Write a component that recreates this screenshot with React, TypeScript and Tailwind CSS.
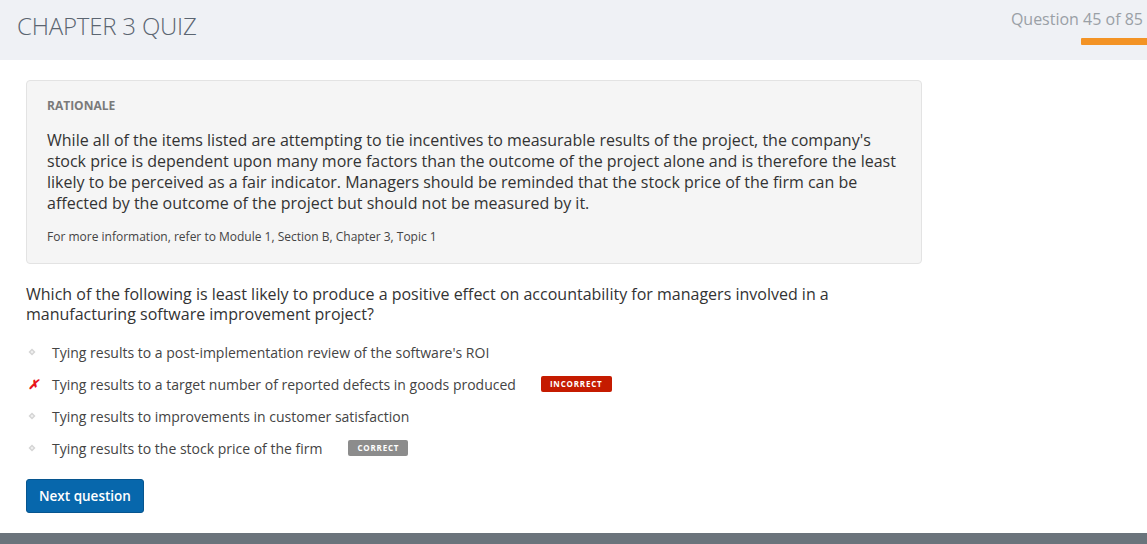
import React from "react";

const Bullet = () => (
  <svg width="8" height="8" viewBox="0 0 8 8" className="shrink-0">
    <path d="M4 0.5 L7.5 4 L4 7.5 L0.5 4 Z" fill="#d4d4d4" />
    <path d="M4 2.5 L5.5 4 L4 5.5 L2.5 4 Z" fill="#f2f2f2" />
  </svg>
);

const options = [
  { text: "Tying results to a post-implementation review of the software's ROI", mark: "none" },
  { text: "Tying results to a target number of reported defects in goods produced", mark: "x", badge: "INCORRECT" },
  { text: "Tying results to improvements in customer satisfaction", mark: "none" },
  { text: "Tying results to the stock price of the firm", mark: "none", badge: "CORRECT" },
];

export default function App() {
  return (
    <div className="w-[1147px] h-[544px] bg-white flex flex-col overflow-hidden" style={{ fontFamily: '"Open Sans", "Liberation Sans", sans-serif' }}>
      <header className="h-[60px] bg-[#eff1f5] flex justify-between shrink-0">
        <h1 className="pl-[17px] pt-[9px] text-[24px] leading-[34px] font-light text-[#5b6571] tracking-[-0.2px]">CHAPTER 3 QUIZ</h1>
        <div className="flex flex-col items-end pt-[8px]">
          <div className="pr-[4px] text-[16px] leading-[22px] text-[#9aa0a6]">Question 45 of 85</div>
          <div className="mt-[8px] w-[66px] h-[7px] bg-[#f39325] rounded-l-[1px]" />
        </div>
      </header>
      <main className="flex-1 px-[26px] pt-[20px]">
        <section className="w-[896px] bg-[#f5f5f5] border border-[#e3e3e3] rounded-[4px] px-[20px] pt-[17px] pb-[18px]">
          <div className="text-[12px] leading-[16px] font-bold text-[#7a7a7a]">RATIONALE</div>
          <p className="mt-[16px] text-[16px] leading-[21px] text-[#333]">
            While all of the items listed are attempting to tie incentives to measurable results of the project, the company's stock price is dependent upon many more factors than the outcome of the project alone and is therefore the least likely to be perceived as a fair indicator. Managers should be reminded that the stock price of the firm can be affected by the outcome of the project but should not be measured by it.
          </p>
          <p className="mt-[15px] text-[12px] leading-[16px] text-[#444]">For more information, refer to Module 1, Section B, Chapter 3, Topic 1</p>
        </section>
        <p className="mt-[20px] w-[820px] text-[16px] leading-[20px] text-[#333]">
          Which of the following is least likely to produce a positive effect on accountability for managers involved in a manufacturing software improvement project?
        </p>
        <ul className="mt-[18px] flex flex-col gap-[12px]">
          {options.map((o, i) => (
            <li key={i} className="flex items-center h-[20px] text-[14px] text-[#444]">
              <span className="w-[26px] pl-[2px] flex items-center">
                {o.mark === "x" ? (
                  <span className="text-[#e8151b] font-bold text-[13px] italic leading-none">✗</span>
                ) : (
                  <Bullet />
                )}
              </span>
              <span>{o.text}</span>
              {o.badge && (
                <span
                  className={
                    o.badge === "INCORRECT"
                      ? "ml-[25px] h-[16px] px-[9px] rounded-[2px] bg-[#c51b00] text-white text-[8px] font-bold tracking-[0.8px] leading-[16px]"
                      : "ml-[26px] h-[16px] px-[9px] rounded-[2px] bg-[#8c8c8c] text-white text-[8px] font-bold tracking-[0.8px] leading-[16px]"
                  }
                >
                  {o.badge}
                </span>
              )}
            </li>
          ))}
        </ul>
        <button className="mt-[21px] h-[34px] px-[12px] bg-[#0767ac] border border-[#06558f] rounded-[3px] text-white text-[13.5px] font-semibold">
          Next question
        </button>
      </main>
      <footer className="h-[11px] bg-[#6b747c] shrink-0" />
    </div>
  );
}
